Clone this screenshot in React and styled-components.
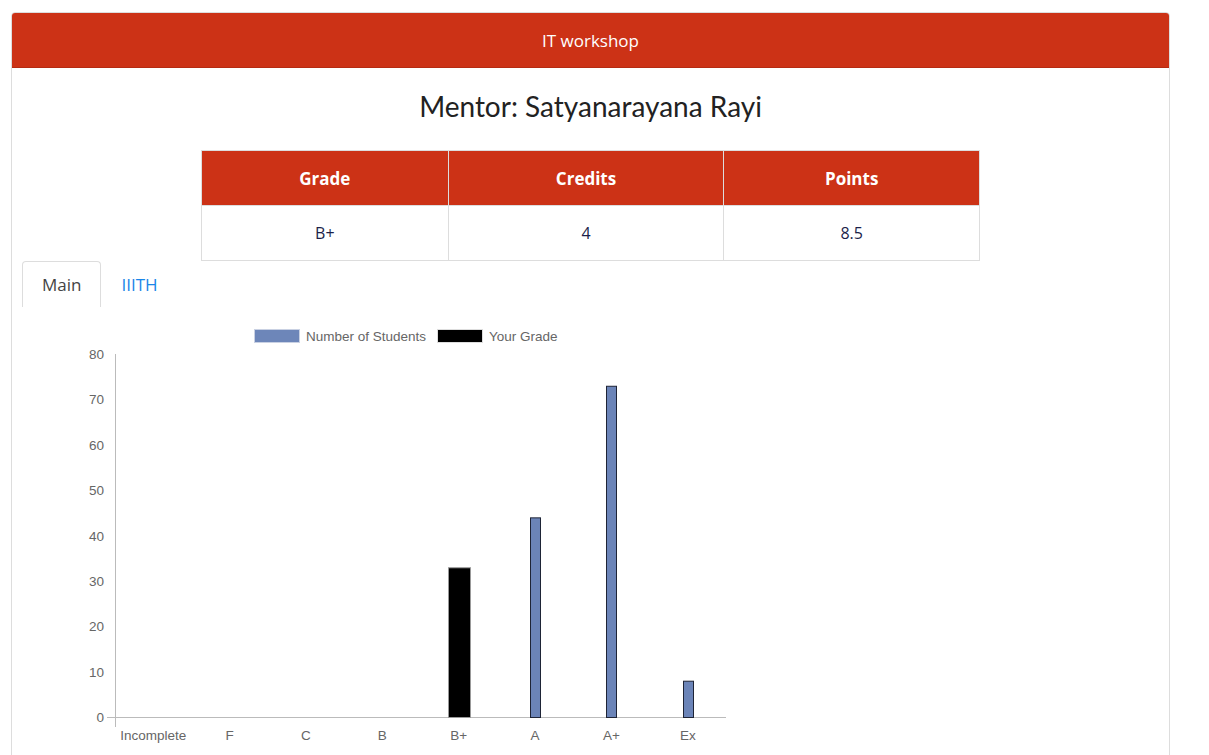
import styled, { createGlobalStyle } from 'styled-components';

const GlobalStyle = createGlobalStyle`
  body {
    margin: 0;
    background: #fff;
    font-family: "Open Sans", "Noto Sans", sans-serif;
    overflow: hidden;
  }
`;

const Page = styled.div`
  padding: 12px 39px 0 11px;
`;

const Card = styled.div`
  border: 1px solid #dddddd;
  border-radius: 4px;
  background: #fff;
  height: 760px;
`;

const CardHeader = styled.div`
  background: #cc3216;
  color: #fff;
  height: 54px;
  display: flex;
  align-items: center;
  justify-content: center;
  font-size: 17px;
  border-bottom: 1px solid #b52b12;
  border-radius: 3px 3px 0 0;
`;

const Mentor = styled.h3`
  margin: 23px 0 0;
  text-align: center;
  font-family: Lato, sans-serif;
  font-weight: 400;
  font-size: 28px;
  line-height: 30px;
  color: #222;
`;

const GradeTable = styled.table`
  margin: 29px auto 0;
  border-collapse: collapse;
  width: 779px;
`;

const HeadCell = styled.th`
  background: #cc3216;
  color: #fff;
  font-weight: 700;
  font-size: 17px;
  height: 54px;
  padding: 0;
  border: 1px solid #dddddd;
  width: ${(p) => p.$w}px;
`;

const Cell = styled.td`
  text-align: center;
  color: #1c1f4a;
  font-size: 16px;
  height: 54px;
  padding: 0;
  border: 1px solid #dddddd;
`;

const Tabs = styled.div`
  display: flex;
  margin-left: 10px;
  height: 46px;
`;

const Tab = styled.div`
  display: flex;
  align-items: center;
  padding: 0 19px;
  font-size: 17px;
  color: ${(p) => (p.$active ? '#444' : '#1a86e8')};
  border: 1px solid ${(p) => (p.$active ? '#dddddd' : 'transparent')};
  border-bottom: none;
  border-radius: 4px 4px 0 0;
  background: #fff;
`;

const Chart = styled.svg`
  display: block;
  font-family: "Liberation Sans", Arial, sans-serif;
`;

const grades = [
  { label: 'Incomplete', value: 0 },
  { label: 'F', value: 0 },
  { label: 'C', value: 0 },
  { label: 'B', value: 0 },
  { label: 'B+', value: 33, mine: true },
  { label: 'A', value: 44 },
  { label: 'A+', value: 73 },
  { label: 'Ex', value: 8 },
];

// chart coords relative to the svg's top-left corner
const X0 = 103;
const X1 = 714;
const YBASE = 410;
const PER = 363 / 80;
const STEP = (X1 - X0) / 8;

function GradeChart() {
  return (
    <Chart width="740" height="450">
      <rect x="242.5" y="22.5" width="45" height="13" fill="#6d86b9" stroke="#c9d1e3" />
      <text x="294" y="33.5" fontSize="13.5" fill="#666">Number of Students</text>
      <rect x="425.5" y="22.5" width="45" height="13" fill="#000" stroke="#ddd" />
      <text x="477" y="33.5" fontSize="13.5" fill="#666">Your Grade</text>

      {[0, 10, 20, 30, 40, 50, 60, 70, 80].map((v) => {
        const y = YBASE - v * PER;
        return (
          <text key={v} x="92" y={y + 5} fontSize="13.5" fill="#666" textAnchor="end">
            {v}
          </text>
        );
      })}
      <line x1="95" y1={YBASE + 0.5} x2={X1} y2={YBASE + 0.5} stroke="#bbb" />
      <line x1={X0 + 0.5} y1={YBASE - 80 * PER} x2={X0 + 0.5} y2={YBASE + 10} stroke="#bbb" />

      {grades.map((g, i) => {
        const cx = X0 + STEP * (i + 0.5);
        const h = g.value * PER;
        const w = g.mine ? 22 : 10;
        return (
          <g key={g.label}>
            {g.value > 0 && (
              <rect
                x={Math.round(cx - w / 2) + 0.5}
                y={YBASE - h + 0.5}
                width={w}
                height={h}
                fill={g.mine ? '#000' : '#6b84b8'}
                stroke={g.mine ? '#999' : '#1e2436'}
              />
            )}
            <text x={cx} y={YBASE + 23} fontSize="13.5" fill="#666" textAnchor="middle">
              {g.label}
            </text>
          </g>
        );
      })}
    </Chart>
  );
}

export default function App() {
  return (
    <Page>
      <GlobalStyle />
      <Card>
        <CardHeader>IT workshop</CardHeader>
        <Mentor>Mentor: Satyanarayana Rayi</Mentor>
        <GradeTable>
          <thead>
            <tr>
              <HeadCell $w={247}>Grade</HeadCell>
              <HeadCell $w={276}>Credits</HeadCell>
              <HeadCell $w={256}>Points</HeadCell>
            </tr>
          </thead>
          <tbody>
            <tr>
              <Cell>B+</Cell>
              <Cell>4</Cell>
              <Cell>8.5</Cell>
            </tr>
          </tbody>
        </GradeTable>
        <Tabs>
          <Tab $active>Main</Tab>
          <Tab>IIITH</Tab>
        </Tabs>
        <GradeChart />
      </Card>
    </Page>
  );
}
